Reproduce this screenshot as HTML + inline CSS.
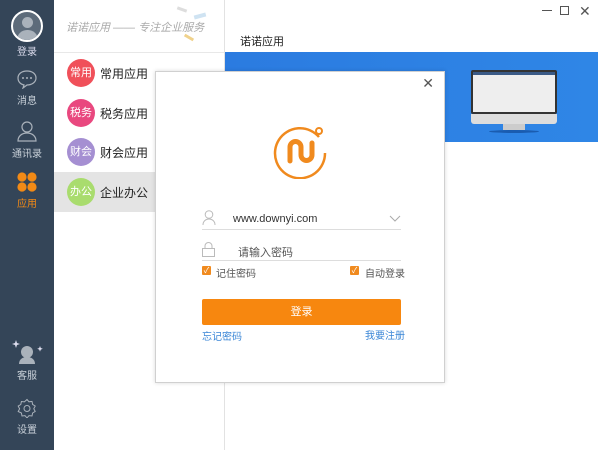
<!DOCTYPE html>
<html><head><meta charset="utf-8"><style>
*{margin:0;padding:0;box-sizing:border-box}
body{width:600px;height:450px;position:relative;overflow:hidden;background:#fff;font-family:"Liberation Sans","Noto Sans CJK SC",sans-serif;font-size:12px;color:#333}
.side{position:absolute;left:0;top:0;width:54px;height:450px;background:#344558;color:#c8d0d8;font-size:10px;text-align:center}
.side .it{position:absolute;left:0;width:54px}
.list{position:absolute;left:54px;top:0;width:171px;height:450px;background:#fff;border-right:1px solid #e2e2e2}
.row{position:absolute;left:0;width:170px;height:40px}
.row .c{position:absolute;left:13px;top:6px;width:28px;height:28px;border-radius:50%;color:#fff;font-size:11px;line-height:28px;text-align:center}
.row .t{position:absolute;left:46px;top:12px;font-size:12px;color:#222}
.dlg{position:absolute;left:155px;top:71px;width:290px;height:312px;background:#fff;border:1px solid #d0d0d0;box-shadow:0 0 4px rgba(0,0,0,.15)}
</style></head><body>
<div class="side">
 <div class="it" style="top:10px"><div style="margin:0 auto;width:32px;height:32px;border-radius:50%;border:2px solid #fff;background:#5d6b7a;position:relative;overflow:hidden"><div style="position:absolute;left:9px;top:5px;width:11px;height:11px;border-radius:50%;background:#aab2bb"></div><div style="position:absolute;left:4px;top:18px;width:21px;height:14px;border-radius:10px 10px 0 0;background:#aab2bb"></div></div><div style="margin-top:1px;color:#dde">登录</div></div>
 <div class="it" style="top:69px"><svg width="22" height="20" viewBox="0 0 22 20"><path d="M11 2C5.5 2 2 5 2 9s3 6.5 6 7l-1 3 4-3c5 0 9-3 9-7S16.5 2 11 2z" fill="none" stroke="#aab2bb" stroke-width="1.2"/><circle cx="7" cy="9" r="1" fill="#aab2bb"/><circle cx="11" cy="9" r="1" fill="#aab2bb"/><circle cx="15" cy="9" r="1" fill="#aab2bb"/></svg><div>消息</div></div>
 <div class="it" style="top:120px"><svg width="22" height="22" viewBox="0 0 22 22"><circle cx="11" cy="7" r="5" fill="none" stroke="#aab2bb" stroke-width="1.2"/><path d="M2 21c0-5 4-8 9-8s9 3 9 8z" fill="none" stroke="#aab2bb" stroke-width="1.2"/></svg><div>通讯录</div></div>
 <div class="it" style="top:172px"><svg width="20" height="20" viewBox="0 0 20 20" fill="#f28a16"><circle cx="5" cy="5" r="4.6"/><circle cx="15" cy="5" r="4.6"/><circle cx="5" cy="15" r="4.6"/><circle cx="15" cy="15" r="4.6"/></svg><div style="color:#f28a16">应用</div></div>
 <div class="it" style="top:340px"><svg width="34" height="24" viewBox="0 0 34 24"><path d="M6 0l1 3 3 1-3 1-1 3-1-3-3-1 3-1z M30 6l.8 2 2 .8-2 .8-.8 2-.8-2-2-.8 2-.8z" fill="#dde"/><circle cx="17" cy="12" r="6" fill="#aab2bb"/><path d="M9 24c0-5 4-7 8-7s8 2 8 7z" fill="#aab2bb"/></svg><div>客服</div></div>
 <div class="it" style="top:398px"><svg width="20" height="20" viewBox="0 0 20 20"><path d="M10 1.5l2 2.3 3 -.4.6 3 2.6 1.6-1.4 2.7 1.4 2.7-2.6 1.6-.6 3-3-.4-2 2.3-2-2.3-3 .4-.6-3L1.2 13.5l1.4-2.7L1.2 8.1l2.6-1.6.6-3 3 .4z" fill="none" stroke="#aab2bb" stroke-width="1"/><circle cx="10" cy="10.5" r="3" fill="none" stroke="#aab2bb"/></svg><div>设置</div></div>
</div>
<div class="list">
 <div style="position:absolute;left:12px;top:19px;font-size:11px;color:#aaa;font-style:italic">诺诺应用 —— 专注企业服务</div>
 <div style="position:absolute;left:123px;top:8px;width:10px;height:3px;background:#ddd;transform:rotate(20deg)"></div>
 <div style="position:absolute;left:140px;top:14px;width:12px;height:4px;background:#cfe3f2;transform:rotate(-15deg)"></div>
 <div style="position:absolute;left:130px;top:36px;width:10px;height:3px;background:#f0d28c;transform:rotate(30deg)"></div>
 <div style="position:absolute;left:0;top:52px;width:170px;height:1px;background:#e8e8e8"></div>
 <div class="row" style="top:53px"><div class="c" style="background:#f0505a">常用</div><div class="t">常用应用</div></div>
 <div class="row" style="top:93px"><div class="c" style="background:#e9487f">税务</div><div class="t">税务应用</div></div>
 <div class="row" style="top:132px"><div class="c" style="background:#a58fd2">财会</div><div class="t">财会应用</div></div>
 <div class="row" style="top:172px;background:#e4e4e4"><div class="c" style="background:#a9dc6e">办公</div><div class="t">企业办公</div></div>
</div>
<div style="position:absolute;left:240px;top:33px;font-size:11px;color:#222">诺诺应用</div>
<div style="position:absolute;left:542px;top:10px;width:10px;height:1px;background:#555"></div>
<div style="position:absolute;left:560px;top:6px;width:9px;height:9px;border:1px solid #555"></div>
<div style="position:absolute;left:579px;top:3px;font-size:14px;color:#555">✕</div>
<div style="position:absolute;left:225px;top:52px;width:373px;height:90px;background:linear-gradient(90deg,#2b7be0,#2f86e6)">
 <div style="position:absolute;left:246px;top:18px;width:86px;height:44px;background:#eee;border:2px solid #333;border-radius:2px"><div style="height:3px;background:#3a5a86"></div></div>
 <div style="position:absolute;left:246px;top:62px;width:86px;height:10px;background:#ddd;border-radius:0 0 3px 3px"></div>
 <div style="position:absolute;left:278px;top:72px;width:22px;height:6px;background:#ccc"></div>
 <div style="position:absolute;left:264px;top:78px;width:50px;height:3px;background:#1a5cb0;border-radius:50%"></div>
</div>
<div class="dlg">
 <div style="position:absolute;right:10px;top:3px;font-size:14px;color:#555">✕</div>
 <svg style="position:absolute;left:117px;top:51px" width="56" height="56" viewBox="0 0 56 56"><path d="M46 14A25 25 0 1 0 52 30" fill="none" stroke="#f08a1e" stroke-width="2.5"/><circle cx="46" cy="8" r="3" fill="none" stroke="#f08a1e" stroke-width="2"/><path d="M17 38V24a5.5 5.5 0 0 1 11 0v8a5.5 5.5 0 0 0 11 0V20" fill="none" stroke="#f08a1e" stroke-width="5" stroke-linecap="round"/></svg>
 <svg style="position:absolute;left:46px;top:138px" width="14" height="15" viewBox="0 0 14 15"><circle cx="7" cy="4.5" r="3.8" fill="none" stroke="#bbb"/><path d="M1 15c0-4 3-6 6-6s6 2 6 6" fill="none" stroke="#bbb"/></svg>
 <div style="position:absolute;left:77px;top:141px;font-size:11px;color:#333">www.downyi.com</div>
 <svg style="position:absolute;left:233px;top:143px" width="12" height="7"><path d="M1 1l5 5 5-5" fill="none" stroke="#aaa"/></svg>
 <div style="position:absolute;left:46px;top:157px;width:199px;height:1px;background:#ddd"></div>
 <svg style="position:absolute;left:46px;top:169px" width="13" height="16"><path d="M3 7V5a3.5 3.5 0 0 1 7 0v2" fill="none" stroke="#bbb"/><rect x=".5" y="7.5" width="12" height="8" fill="none" stroke="#bbb"/></svg>
 <div style="position:absolute;left:82px;top:172px;font-size:11px;color:#555">请输入密码</div>
 <div style="position:absolute;left:46px;top:188px;width:199px;height:1px;background:#ddd"></div>
 <div style="position:absolute;left:46px;top:194px;width:9px;height:9px;background:#f08a1e;border-radius:1px;color:#fff;font-size:8px;line-height:9px;text-align:center">✓</div>
 <div style="position:absolute;left:60px;top:193px;font-size:10px;color:#555">记住密码</div>
 <div style="position:absolute;left:194px;top:194px;width:9px;height:9px;background:#f08a1e;border-radius:1px;color:#fff;font-size:8px;line-height:9px;text-align:center">✓</div>
 <div style="position:absolute;left:209px;top:193px;font-size:10px;color:#555">自动登录</div>
 <div style="position:absolute;left:46px;top:227px;width:199px;height:26px;background:#f7870f;border-radius:2px;color:#fff;text-align:center;line-height:26px;font-size:11px">登录</div>
 <div style="position:absolute;left:46px;top:256px;font-size:10px;color:#3a86d6">忘记密码</div>
 <div style="position:absolute;left:209px;top:255px;font-size:10px;color:#3a86d6">我要注册</div>
</div>
</body></html>
